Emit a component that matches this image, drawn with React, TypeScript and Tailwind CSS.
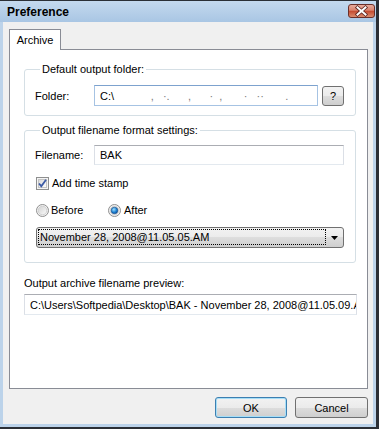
import React from 'react';

const btnBg =
  'bg-[linear-gradient(to_bottom,#f2f2f2_0%,#ebebeb_50%,#dddddd_50%,#cfcfcf_100%)]';

function CloseButton() {
  return (
    <svg width="27" height="14" viewBox="0 0 27 14">
      <defs>
        <linearGradient id="closeGrad" x1="0" y1="0" x2="0" y2="1">
          <stop offset="0" stopColor="#eab0a2" />
          <stop offset="0.45" stopColor="#d9826c" />
          <stop offset="0.5" stopColor="#c4482e" />
          <stop offset="1" stopColor="#dc9274" />
        </linearGradient>
      </defs>
      <rect x="0.5" y="0.5" width="26" height="13" rx="2.5" fill="url(#closeGrad)" stroke="#6b2f29" />
      <path d="M9.5 3.5 L17.5 10.5 M17.5 3.5 L9.5 10.5" stroke="#5a2420" strokeWidth="3.6" strokeLinecap="square" />
      <path d="M9.5 3.5 L17.5 10.5 M17.5 3.5 L9.5 10.5" stroke="#ffffff" strokeWidth="2" strokeLinecap="square" />
    </svg>
  );
}

function CheckBox() {
  return (
    <svg width="13" height="13" viewBox="0 0 13 13" className="shrink-0">
      <defs>
        <linearGradient id="cbGrad" x1="0" y1="0" x2="1" y2="1">
          <stop offset="0" stopColor="#d8d8d8" />
          <stop offset="1" stopColor="#ffffff" />
        </linearGradient>
      </defs>
      <rect x="0.5" y="0.5" width="12" height="12" fill="#f4f4f4" stroke="#8e8f8f" />
      <rect x="2.5" y="2.5" width="8" height="8" fill="url(#cbGrad)" stroke="#c4c4c4" />
      <path d="M3 6.5 L5.3 9.2 L10 2.8" fill="none" stroke="#3b5aa5" strokeWidth="1.8" />
    </svg>
  );
}

function Radio({ checked }: { checked?: boolean }) {
  return (
    <svg width="13" height="13" viewBox="0 0 13 13" className="shrink-0">
      <defs>
        <linearGradient id="rbGrad" x1="0" y1="0" x2="1" y2="1">
          <stop offset="0" stopColor="#d2d2d2" />
          <stop offset="1" stopColor="#fbfbfb" />
        </linearGradient>
        <radialGradient id="rbDot" cx="0.4" cy="0.35" r="0.7">
          <stop offset="0" stopColor="#9fe0ff" />
          <stop offset="0.6" stopColor="#1c80d0" />
          <stop offset="1" stopColor="#0a4a98" />
        </radialGradient>
      </defs>
      <circle cx="6.5" cy="6.5" r="6" fill="#f3f3f3" stroke="#8f8f8f" />
      <circle cx="6.5" cy="6.5" r="4.3" fill="url(#rbGrad)" stroke="#c9c9c9" strokeWidth="0.8" />
      {checked && <circle cx="6.5" cy="6.5" r="3.3" fill="url(#rbDot)" stroke="#1a4f8a" strokeWidth="0.6" />}
    </svg>
  );
}

export default function App() {
  return (
    <div className="flex flex-col w-[379px] h-[429px] border-t border-r-[3px] border-b-[2px] border-[#2b2f36] bg-[#bcd3ea] font-['Liberation_Sans',Arial,sans-serif] text-[11px] text-black overflow-hidden">
      {/* title bar */}
      <div className="flex justify-between h-[21px] pl-[7px] pr-[1px] bg-[linear-gradient(to_bottom,#c4d9ee,#a9c6e4)]">
        <span className="pt-[4px] text-[12px] font-bold leading-[14px]">Preference</span>
        <div className="pt-[3px]">
          <CloseButton />
        </div>
      </div>

      {/* body */}
      <div className="flex-1 flex flex-col mx-[3px] mb-[3px] bg-[#f0f0f0] pt-[7px] pl-[6px] pr-[5px]">
        {/* tab */}
        <div className="relative z-10 -mb-px w-[52px] h-[21px] bg-white border border-b-0 border-[#898c95] flex justify-center pt-[3px] leading-[14px]">
          Archive
        </div>

        {/* tab panel */}
        <div className="h-[340px] bg-white border border-[#898c95] pt-[12px] pl-[14px]">
          <fieldset className="w-[332px] border border-[#d5dfe5] rounded-[3px] pl-[10px] pr-[11px] pt-[9px] pb-[9px]">
            <legend className="ml-[5px] px-[2px] leading-[14px]">Default output folder:</legend>
            <div className="flex items-center">
              <span className="w-[59px] leading-[14px]">Folder:</span>
              <div className="w-[224px] h-[21px] border border-[#a6c3e3] border-t-[#7da2ce] pl-[5px] flex items-center whitespace-pre leading-[14px]">
                <span>{'C:\\'}</span>
                <span className="text-[#7a7a7a]">{'            ,   ·.      ,      ·  ,       ·   ··       .'}</span>
              </div>
              <button className={`ml-[4px] w-[22px] h-[20px] border border-[#707070] rounded-[3px] ${btnBg} leading-[14px]`}>?</button>
            </div>
          </fieldset>

          <fieldset className="mt-[7px] w-[332px] border border-[#d5dfe5] rounded-[3px] pl-[10px] pr-[11px] pt-[8px] pb-[14px]">
            <legend className="ml-[5px] px-[2px] leading-[14px]">Output filename format settings:</legend>
            <div className="flex items-center">
              <span className="w-[59px] leading-[14px]">Filename:</span>
              <div className="w-[250px] h-[20px] border border-[#e3e9ef] border-t-[#abadb3] border-l-[#dbdfe6] border-r-[#dbdfe6] pl-[5px] flex items-center leading-[14px]">
                BAK
              </div>
            </div>
            <div className="mt-[11px] ml-px flex items-center gap-[3px] h-[14px]">
              <CheckBox />
              <span className="leading-[14px]">Add time stamp</span>
            </div>
            <div className="mt-[13px] ml-px flex items-center h-[14px]">
              <div className="w-[72px] flex items-center gap-[2px]">
                <Radio />
                <span className="leading-[14px]">Before</span>
              </div>
              <div className="flex items-center gap-[3px]">
                <Radio checked />
                <span className="leading-[14px]">After</span>
              </div>
            </div>
            <div className={`mt-[10px] ml-px w-[308px] h-[21px] border border-[#707070] rounded-[3px] ${btnBg} flex pl-px pt-px`}>
              <div className="w-[288px] h-[16px] border border-dotted border-black flex items-center pl-px leading-[14px]">
                November 28, 2008@11.05.05.AM
              </div>
              <div className="flex-1 flex items-center justify-center pb-[1px]">
                <svg width="7" height="4" viewBox="0 0 7 4">
                  <path d="M0 0 H7 L3.5 4 Z" fill="#000" />
                </svg>
              </div>
            </div>
          </fieldset>

          <div className="mt-[13px] leading-[14px]">Output archive filename preview:</div>
          <div className="mt-[4px] w-[333px] h-[21px] border border-[#e3e9ef] border-t-[#abadb3] border-l-[#dbdfe6] border-r-[#dbdfe6] pl-[5px] flex items-center overflow-hidden whitespace-nowrap leading-[14px]">
            {'C:\\Users\\Softpedia\\Desktop\\BAK - November 28, 2008@11.05.09.AM'}
          </div>
        </div>

        {/* buttons */}
        <div className="mt-[8px] flex justify-end gap-[8px]">
          <button className={`w-[72px] h-[21px] border border-[#3c7fb1] rounded-[3px] ${btnBg} shadow-[inset_0_0_0_1px_#a6def7] leading-[14px]`}>
            OK
          </button>
          <button className={`w-[73px] h-[21px] border border-[#707070] rounded-[3px] ${btnBg} leading-[14px]`}>
            Cancel
          </button>
        </div>
      </div>
    </div>
  );
}
